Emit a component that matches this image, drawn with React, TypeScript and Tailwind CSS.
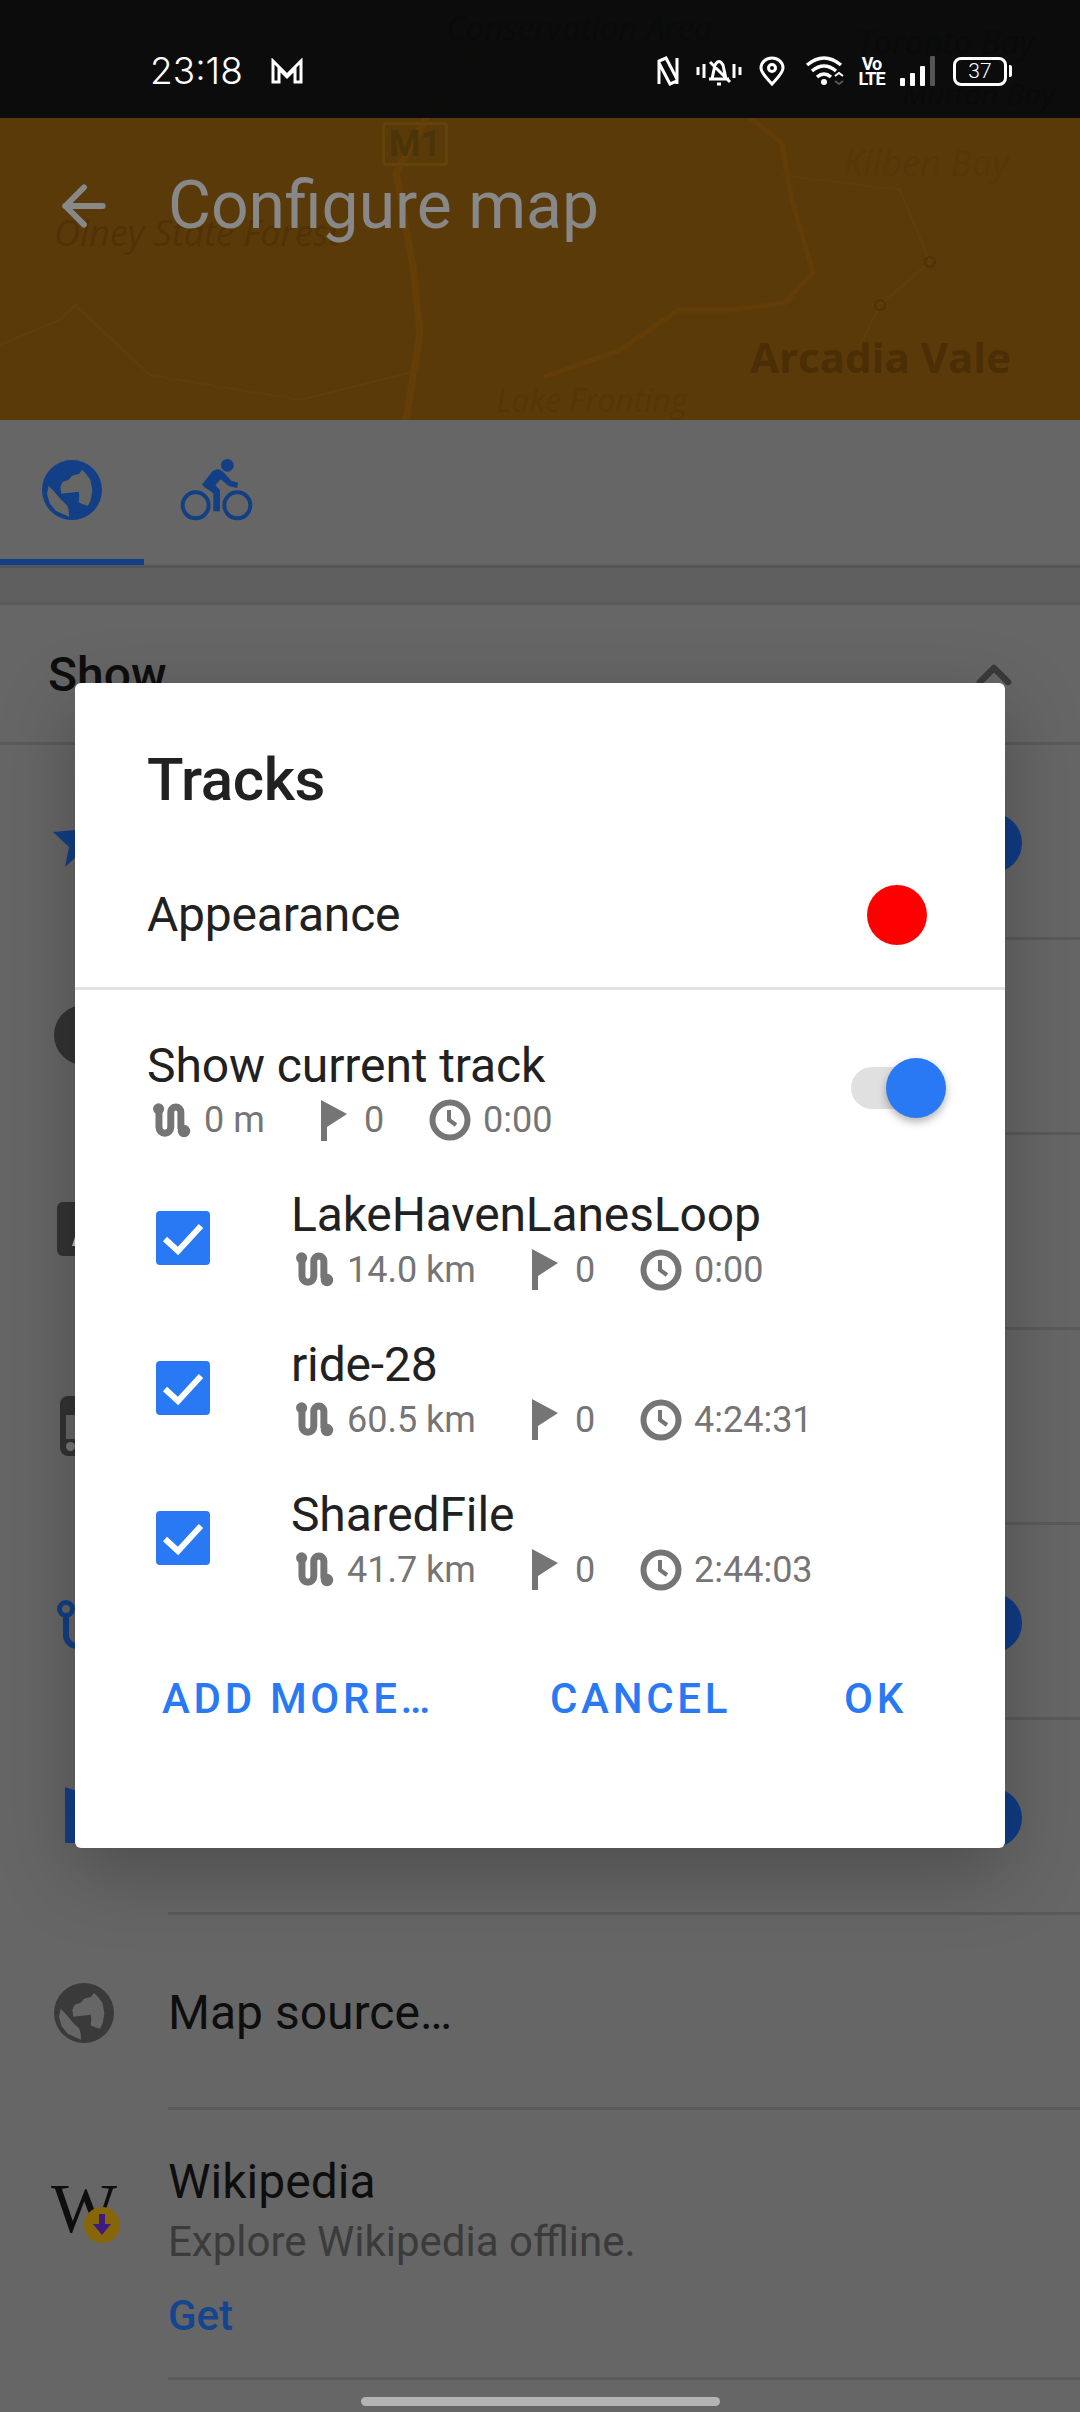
import { ArrowLeft, ChevronUp } from 'lucide-react';

const tracks = [
    { name: 'LakeHavenLanesLoop', distance: '14.0 km', time: '0:00' },
    { name: 'ride-28', distance: '60.5 km', time: '4:24:31' },
    { name: 'SharedFile', distance: '41.7 km', time: '2:44:03' },
];

const GlobeIcon = ({ className }: { className: string }) => (
    <svg viewBox="125 95 180 180" className={className} fill="currentColor" fillRule="evenodd">
        <path d="M215 95a90 90 0 1 0 0 180a90 90 0 1 0 0-180z M245 124l-8 12-22 6-10 12-18 6-7 16 3 20 52-6 2 12-2 20 12 6 16 4 8-16 5-30-6-32-13-18z M145 172l-5 25 8 28 18 22 40 18-1-20-5-14-19-18-20-24z" />
    </svg>
);

const BikeIcon = ({ className }: { className: string }) => (
    <svg viewBox="535 85 225 195" className={className} fill="currentColor">
        <circle cx="680" cy="110" r="19" />
        <circle cx="585" cy="230" r="39" fill="none" stroke="currentColor" strokeWidth="12" />
        <circle cx="710" cy="230" r="39" fill="none" stroke="currentColor" strokeWidth="12" />
        <path d="M606 165l30-38q18-12 32 3l24 26 20 6-2 16-26-6-24-20-16 18 14 14v64h-20v-54l-28-20q-10-12-4-9z" />
    </svg>
);

const RouteIcon = () => (
    <svg viewBox="18 42 115 105" className="w-[40px] h-[37px] shrink-0" fill="none" stroke="#757575" strokeWidth="20">
        <circle cx="37" cy="61" r="16" fill="#757575" stroke="none" />
        <circle cx="110" cy="125" r="18" fill="#757575" stroke="none" />
        <path d="M38 62v52a17 17 0 0 0 34 0v-44a14 14 0 0 1 29 0v50" />
    </svg>
);

const FlagIcon = () => (
    <svg viewBox="0 0 26 41" className="w-[26px] h-[41px] shrink-0" fill="#757575">
        <path d="M0 0L26 14L6 27V41H0Z" />
    </svg>
);

const ClockIcon = () => (
    <svg viewBox="0 0 42 42" className="w-[42px] h-[42px] shrink-0" fill="none" stroke="#757575">
        <circle cx="21" cy="21" r="17.5" strokeWidth="6" />
        <path d="M20 11v10l7 5" strokeWidth="4" />
    </svg>
);

const Stats = ({ distance, time, wide }: { distance: string; time: string; wide?: boolean }) => (
    <div className="flex items-center h-[44px] text-[36px] leading-[44px] text-[#757575]">
        <div className={wide ? 'w-[241px] flex items-center pl-[4px]' : 'w-[174px] flex items-center pl-[5px]'}>
            <RouteIcon />
            <span className="ml-[12px]">{distance}</span>
        </div>
        <FlagIcon />
        <span className="ml-[17px] w-[65px]">0</span>
        <ClockIcon />
        <span className="ml-[12px]">{time}</span>
    </div>
);

const CheckBox = () => (
    <div className="w-[54px] h-[54px] bg-[#2979f5] rounded-[4px] flex items-center justify-center shrink-0">
        <svg viewBox="0 0 54 54" className="w-[54px] h-[54px]" fill="none" stroke="#fff" strokeWidth="6">
            <path d="M9 28l13 12 23-25" />
        </svg>
    </div>
);

const StatusIcons = () => (
    <div className="flex items-center h-[40px] text-white">
        <svg viewBox="0 0 22 30" className="w-[22px] h-[30px]" fill="none" stroke="#fff" strokeWidth="3">
            <path d="M2 28V5l7-3 11 21v5M20 2v23l-7 3L2 7" />
        </svg>
        <svg viewBox="0 0 46 30" className="w-[46px] h-[30px] ml-[17px]" fill="none" stroke="#fff" strokeWidth="3">
            <path d="M2 11v8M8 8v14M38 8v14M44 11v8M13 23h20M16 23l3-14q4-7 8 0l3 14M21 28h4M14 6l20 20" />
        </svg>
        <svg viewBox="0 0 26 30" className="w-[26px] h-[30px] ml-[17px]" fill="none" stroke="#fff" strokeWidth="3">
            <path d="M13 28C7 21 2 17 2 12a11 10 0 0 1 22 0c0 5-5 9-11 16z" />
            <circle cx="13" cy="12" r="3.5" />
        </svg>
        <svg viewBox="0 0 40 30" className="w-[40px] h-[30px] ml-[20px]" fill="none" stroke="#fff" strokeWidth="3.5">
            <path d="M2 9q17-14 34 0M7 15q12-10 24 0M12 21q7-6 14 0" />
            <circle cx="19" cy="26" r="3" fill="#fff" stroke="none" />
            <path d="M30 20l4-3 4 3" strokeWidth="2" />
            <path d="M30 25l4 3 4-3" stroke="#555" strokeWidth="2" />
        </svg>
        <div className="ml-[15px] w-[23px] flex flex-col items-center font-['Roboto',sans-serif] font-bold text-[18px] leading-[15px] tracking-[-1px]">
            <span>Vo</span>
            <span>LTE</span>
        </div>
        <div className="ml-[17px] flex items-end gap-[5px] h-[30px]">
            <div className="w-[5px] h-[8px] bg-white rounded-[1px]" />
            <div className="w-[5px] h-[13px] bg-white rounded-[1px]" />
            <div className="w-[5px] h-[20px] bg-white rounded-[1px]" />
            <div className="w-[5px] h-[30px] bg-[#555] rounded-[1px]" />
        </div>
        <div className="ml-[18px] flex items-center">
            <div className="w-[54px] h-[29px] border-[3px] border-white rounded-[8px] flex items-center justify-center font-['Roboto',sans-serif] font-light text-[21px] leading-none">
                37
            </div>
            <div className="w-[3px] h-[12px] bg-white ml-[2px] rounded-r-[2px]" />
        </div>
    </div>
);

const MapBackdrop = () => (
    <div className="absolute inset-0 overflow-hidden font-['Open_Sans',sans-serif]">
        <svg viewBox="0 0 1080 420" className="absolute inset-0 w-[1080px] h-[420px]" fill="none">
            <path d="M516 0L427 117L396 173L413 267L420 333L406 420" stroke="#653e07" strokeWidth="7" />
            <path d="M544 377L620 350L678 310L730 310L785 303L813 273L792 200L782 143L750 118" stroke="#633d07" strokeWidth="5" />
            <path d="M0 345L60 320L75 305L150 375L300 400L420 370M782 175L900 190L930 262L880 305L860 345" stroke="#603e0a" strokeWidth="2" />
            <circle cx="930" cy="262" r="5" stroke="#4f3207" strokeWidth="2" />
            <circle cx="880" cy="305" r="5" stroke="#4f3207" strokeWidth="2" />
        </svg>
        <span className="absolute left-[446px] top-[6px] text-[33px] leading-[44px] italic text-[#14181c] whitespace-nowrap">Conservation Area</span>
        <span className="absolute left-[857px] top-[20px] text-[33px] leading-[44px] italic text-[#14181c] whitespace-nowrap">Toronto Bay</span>
        <span className="absolute left-[902px] top-[72px] text-[30px] leading-[44px] italic text-[#14181c] whitespace-nowrap">Mutton Bay</span>
        <span className="absolute left-[843px] top-[141px] text-[36px] leading-[44px] italic text-[#563708] whitespace-nowrap">Kilben Bay</span>
        <span className="absolute left-[54px] top-[211px] text-[36px] leading-[44px] italic text-[#503206] whitespace-nowrap">Olney State Forest</span>
        <span className="absolute left-[496px] top-[378px] text-[32px] leading-[44px] italic text-[#553607] whitespace-nowrap">Lake Fronting</span>
        <span className="absolute left-[750px] top-[331px] text-[42px] leading-[52px] font-bold text-[#4a2e05] whitespace-nowrap">Arcadia Vale</span>
        <div className="absolute left-[382px] top-[122px] w-[66px] h-[44px] border-[3px] border-[#63420c] rounded-[4px] flex items-center justify-center font-['Roboto',sans-serif] font-bold text-[36px] text-[#4c340a]">
            M1
        </div>
    </div>
);

const Row = ({ children, height = 'h-[195px]' }: { children?: React.ReactNode; height?: string }) => (
    <div className={`${height} relative flex items-center pl-[168px] after:absolute after:left-[168px] after:right-0 after:bottom-0 after:h-[3px] after:bg-[#5a5a5a]`}>
        {children}
    </div>
);

const Knob = () => <div className="absolute left-[962px] w-[60px] h-[60px] rounded-full bg-[#103c84]" />;

const App = () => {
    return (
        <div className="relative w-[1080px] h-[2412px] overflow-hidden bg-[#666666] font-['Roboto',sans-serif]">
            <div className="relative h-[420px] bg-[#5b3a09]">
                <MapBackdrop />
                <div className="relative h-[118px] bg-[#070a0c]/95 flex items-center justify-between pl-[150px] pr-[68px] pt-[24px]">
                    <div className="flex items-center text-white">
                        <span className="font-['Inter',sans-serif] font-light text-[37px] leading-[40px]">23:18</span>
                        <svg viewBox="0 0 32 26" className="w-[32px] h-[26px] ml-[28px]" fill="none" stroke="#fff" strokeWidth="3">
                            <path d="M2 24V3l14 14L30 3v21h-6V11l-8 8-8-8v13z" />
                        </svg>
                    </div>
                    <StatusIcons />
                </div>
                <div className="relative flex items-center h-[170px] pl-[52px] pt-[5px]">
                    <ArrowLeft className="w-[64px] h-[64px] text-[#888888]" strokeWidth={2.2} />
                    <span className="ml-[52px] text-[66px] leading-[80px] text-[#888888]">Configure map</span>
                </div>
            </div>

            <div className="relative h-[145px] flex">
                <div className="w-[144px] flex items-center justify-center pb-[6px]">
                    <GlobeIcon className="w-[60px] h-[60px] text-[#123f85]" />
                </div>
                <div className="ml-[35px] flex items-center pb-[6px]">
                    <BikeIcon className="w-[75px] h-[65px] text-[#123f85]" />
                </div>
                <div className="absolute left-0 bottom-0 w-[144px] h-[6px] bg-[#123f85]" />
            </div>
            <div className="h-[40px] bg-[#5f5f5f] border-t-[3px] border-[#555555] border-b-[3px] border-b-[#5a5a5a]" />

            <div className="h-[140px] flex items-center justify-between pl-[48px] pr-[58px] pt-[2px] border-b-[3px] border-[#5a5a5a] text-[#0e0e0e]">
                <span className="text-[48px] font-medium">Show</span>
                <ChevronUp className="w-[56px] h-[56px] text-[#3a3a3a]" strokeWidth={2.8} />
            </div>

            <Row>
                <svg viewBox="53 830 22 37" className="absolute left-[53px] top-[85px] w-[22px] h-[37px]" fill="#123f85">
                    <path d="M53 832L75 830V858L65 867L69 847Z" />
                </svg>
                <Knob />
            </Row>
            <Row>
                <div className="absolute left-[54px] top-[65px] w-[60px] h-[60px] rounded-full bg-[#333333]" />
            </Row>
            <Row>
                <div className="absolute left-[57px] top-[67px] w-[56px] h-[54px] rounded-[6px] bg-[#333333]">
                    <div className="absolute left-[15px] bottom-[10px] w-0 h-0 border-x-[6px] border-x-transparent border-b-[18px] border-b-[#bdbdbd]" />
                </div>
            </Row>
            <Row>
                <div className="absolute left-[60px] top-[66px] w-[50px] h-[60px] rounded-[8px] bg-[#333333]">
                    <div className="absolute left-[6px] top-[19px] w-[30px] h-[24px] bg-[#666666]" />
                    <div className="absolute left-[6px] top-[46px] w-[9px] h-[9px] rounded-full bg-[#777777]" />
                </div>
            </Row>
            <Row>
                <div className="absolute left-[57px] top-[75px] w-[18px] h-[18px] rounded-full border-[5px] border-[#123f85]" />
                <div className="absolute left-[63px] top-[92px] w-[30px] h-[32px] rounded-bl-[14px] border-l-[6px] border-b-[6px] border-[#123f85]" />
                <Knob />
            </Row>
            <Row>
                <svg viewBox="0 0 30 56" className="absolute left-[65px] top-[67px] w-[30px] h-[56px]" fill="#123f85">
                    <path d="M0 0L30 10V56H0Z" />
                </svg>
                <Knob />
            </Row>
            <Row>
                <GlobeIcon className="absolute left-[54px] w-[60px] h-[60px] text-[#3a3a3a]" />
                <span className="text-[48px] leading-[60px] text-[#0e0e0e]">Map source…</span>
            </Row>
            <Row height="h-[270px]">
                <div className="absolute left-[51px] top-[64px] w-[72px] h-[72px]">
                    <span className="absolute left-0 top-0 font-['Liberation_Serif',serif] text-[70px] leading-[70px] text-[#0e0e0e]">W</span>
                    <div className="absolute left-[33px] top-[33px] w-[36px] h-[36px] rounded-full bg-[#87660a] flex items-center justify-center">
                        <svg viewBox="0 0 20 24" className="w-[20px] h-[24px]" fill="#3e1a80">
                            <path d="M7 1h6v10h6L10 22 1 11h6z" />
                        </svg>
                    </div>
                </div>
                <div className="flex flex-col pt-[6px]">
                    <span className="text-[48px] leading-[60px] text-[#0e0e0e]">Wikipedia</span>
                    <span className="text-[42px] leading-[56px] text-[#3b3b3b] mt-[2px]">Explore Wikipedia offline.</span>
                    <span className="text-[42px] leading-[56px] font-medium text-[#14468f] mt-[18px]">Get</span>
                </div>
            </Row>
            <div className="absolute left-[361px] top-[2397px] w-[359px] h-[9px] rounded-full bg-[#b4b4b4]" />

            <div className="absolute left-[75px] top-[683px] w-[930px] h-[1165px] rounded-[6px] bg-white shadow-[0_24px_76px_rgba(0,0,0,0.25)] text-[#212121]">
                <div className="pt-[67px] pl-[72px] text-[60px] leading-[60px] font-medium tracking-[-0.4px]">Tracks</div>
                <div className="flex items-center justify-between pt-[75px] pb-[42px] pl-[72px] pr-[78px]">
                    <span className="text-[48px] leading-[60px] tracking-[-0.2px]">Appearance</span>
                    <div className="w-[60px] h-[60px] rounded-full bg-[#ff0000]" />
                </div>
                <div className="h-[3px] bg-[#e3e3e3]" />
                <div className="relative pt-[46px] pl-[72px]">
                    <div className="text-[48px] leading-[60px] tracking-[-0.1px]">Show current track</div>
                    <div className="mt-[2px]">
                        <Stats distance="0 m" time="0:00" />
                    </div>
                    <div className="absolute left-[776px] top-[77px] w-[84px] h-[42px] rounded-full bg-[#e0e0e0]" />
                    <div className="absolute left-[811px] top-[68px] w-[60px] h-[60px] rounded-full bg-[#2979f5] shadow-[0_4px_8px_rgba(0,0,0,0.3)]" />
                </div>
                <div className="mt-[21px]">
                    {tracks.map((track) => (
                        <div key={track.name} className="h-[150px] flex items-center pl-[81px]">
                            <CheckBox />
                            <div className="ml-[81px]">
                                <div className="text-[48px] leading-[60px] tracking-[-0.15px]">{track.name}</div>
                                <div className="mt-[3px]">
                                    <Stats distance={track.distance} time={track.time} wide />
                                </div>
                            </div>
                        </div>
                    ))}
                </div>
                <div className="mt-[55px] flex items-center h-[60px] pl-[87px] text-[42px] font-medium tracking-[3.7px] text-[#2979f5]">
                    <span>ADD MORE…</span>
                    <span className="absolute left-[475px]">CANCEL</span>
                    <span className="absolute left-[769px]">OK</span>
                </div>
            </div>
        </div>
    );
};

export default App;
